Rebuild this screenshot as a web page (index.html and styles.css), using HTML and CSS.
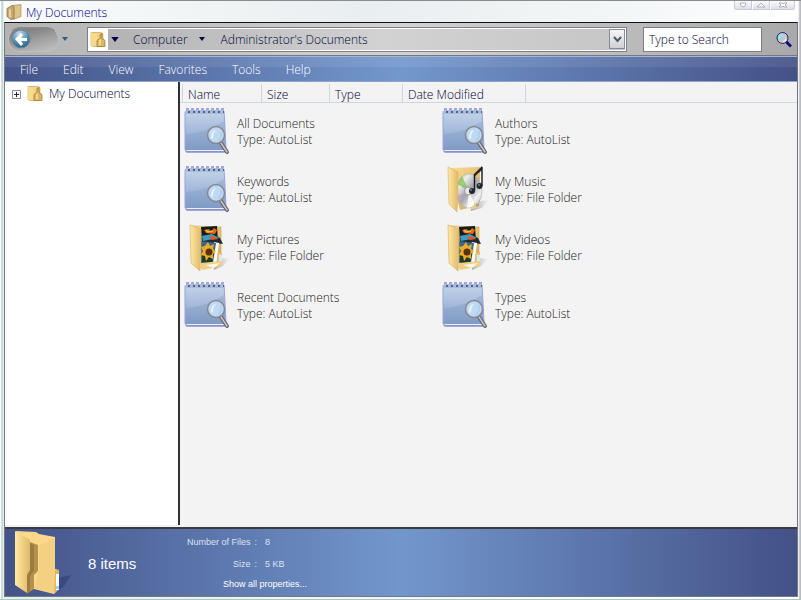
FILE: index.html
```html
<!DOCTYPE html>
<html lang="en">
<head>
<meta charset="utf-8">
<title>My Documents</title>
<link rel="stylesheet" href="styles.css">
</head>
<body>
<svg class="defs" aria-hidden="true">
  <defs>
    <linearGradient id="pad" x1="0" y1="0" x2="0" y2="1">
      <stop offset="0" stop-color="#c3d5ea"/><stop offset=".5" stop-color="#a3b9d9"/><stop offset="1" stop-color="#829dc5"/>
    </linearGradient>
    <linearGradient id="flap" x1="0" y1="0" x2="1" y2="0">
      <stop offset="0" stop-color="#ffe9a4"/><stop offset="1" stop-color="#e0b968"/>
    </linearGradient>
    <linearGradient id="back" x1="0" y1="0" x2="1" y2="1">
      <stop offset="0" stop-color="#ffe09a"/><stop offset="1" stop-color="#cfa354"/>
    </linearGradient>
    <linearGradient id="disc" x1="0" y1="0" x2="1" y2="1">
      <stop offset="0" stop-color="#83b95b"/><stop offset=".25" stop-color="#eef0ee"/><stop offset=".5" stop-color="#a4a4a9"/><stop offset=".75" stop-color="#f3f1f5"/><stop offset="1" stop-color="#a49aad"/>
    </linearGradient>
    <linearGradient id="shade" x1="0" y1="0" x2="1" y2="0">
      <stop offset="0" stop-color="#555" stop-opacity=".5"/><stop offset="1" stop-color="#777" stop-opacity="0"/>
    </linearGradient>
    <radialGradient id="globe" cx=".4" cy=".2" r=".9">
      <stop offset="0" stop-color="#c4dcea"/><stop offset=".55" stop-color="#5590b5"/><stop offset="1" stop-color="#1c4f78"/>
    </radialGradient>
  </defs>
  <symbol id="i-autolist" viewBox="0 0 48 48">
    <path d="M3 4h38l1 17 1 22q0 2-2 2H5q-3 0-3-3V6q0-2 1-2z" fill="url(#pad)" stroke="#9aa0dc"/>
    <path d="M3 27q20-1 38-13l1 29H3z" fill="#6f8dbb" opacity=".25"/>
    <path d="M3 43h39v1H5q-2 0-2-1z" fill="#eef0f8"/>
    <path d="M3 45h39" stroke="#8184cc"/>
    <path d="M3 3h38v4H3z" fill="#a9bbdc"/>
    <path d="M3 2h39" stroke="#a3a6de" stroke-width="2" stroke-dasharray="3 2"/>
    <path d="M5 5h36" stroke="#56637f" stroke-width="2" stroke-dasharray="2 3"/>
    <path d="M38 36l6 9" stroke="#68666b" stroke-width="4" stroke-linecap="round"/>
    <path d="M38 36l6 9" stroke="#c8c5c9" stroke-width="1.5" stroke-linecap="round"/>
    <circle cx="33" cy="28" r="8.5" fill="#c0d9f2" stroke="#85878e" stroke-width="1.5"/>
    <path d="M28 31q0-8 5-8-3 3-3 9z" fill="#e2f2ff"/>
    <path d="M35 34q4-3 3-10" fill="none" stroke="#a9cef0" stroke-width="1.5"/>
  </symbol>
  <symbol id="i-pictures" viewBox="0 0 48 48">
    <path d="M30 34l17 2-7 7-9 4z" fill="url(#shade)"/>
    <path d="M9 3l29 1v36l-18 3z" fill="url(#back)" stroke="#c9a14f" stroke-width=".6"/>
    <path d="M18 4l16-1 1 16-16 6z" fill="#111c25"/>
    <path d="M19 12q11-2 18 3l3 6-21-3z" fill="#222b33"/>
    <path d="M19 13l10-2 7 4-16 3z" fill="#3d9bc4"/>
    <path d="M21 7l5-1 2 3 3-4 3 2-2 4-9-1z" fill="#e76a1a"/>
    <path d="M23 7l2 2 5-1" fill="none" stroke="#f4c037" stroke-width="1.5"/>
    <path d="M26 14l4-1 5 3-6 1z" fill="#e9571c"/>
    <path d="M31 19l5 1-3 23-13-1z" fill="#fff"/>
    <path d="M18 18l15 2-3 20-12 1z" fill="#35688b"/>
    <path d="M19 32l12-2-2 10-10 1z" fill="#223b22"/>
    <path d="M25 19l2 4 4-2-1 5 3 2-3 3 0 5-4-2-3 4-1-5-4-1 2-4-2-4 4-1z" fill="#ecac29"/>
    <circle cx="26" cy="29" r="3.5" fill="#54330c"/>
    <path d="M34 31l5-2v14l-4 1z" fill="#e8c376"/><path d="M36 32h3v10h-3z" fill="#d9e9f6"/>
    <path d="M7 2l11 4v27l-1 15L8 40z" fill="url(#flap)" stroke="#d5af5c" stroke-width=".6"/>
    <path d="M17 40l22-2v5l-19 4-3-2z" fill="#efcf86"/><path d="M22 42l15-2-6 5z" fill="#fff" opacity=".8"/>
  </symbol>
  <symbol id="i-music" viewBox="0 0 48 48">
    <path d="M30 37l18-2-7 8-11 3z" fill="url(#shade)"/>
    <path d="M8 3l31-1v38l-20 5z" fill="url(#back)"/>
    <ellipse cx="28" cy="26" rx="13" ry="17" fill="url(#disc)" stroke="#b7b4a7" stroke-width=".7"/>
    <path d="M28 26l-12-7 5-8z" fill="#7fbd4b" opacity=".7"/><path d="M28 26l6 15-8 2z" fill="#fff" opacity=".8"/><path d="M28 26l-11 9-1-4z" fill="#c77ad2" opacity=".4"/>
    <ellipse cx="27" cy="26" rx="3.5" ry="4" fill="#e7e8ea" stroke="#999"/>
    <path d="M34 38l5-1v5l-10 3z" fill="#edcb80"/><path d="M35 39l3-1v3l-3 1z" fill="#78aee0"/>
    <path d="M7 2l10 5v23l-1 17-8-8z" fill="url(#flap)" stroke="#d7b160" stroke-width=".6"/>
    <path d="M33 9l8-8v4l-8 7z" fill="#26272d"/>
    <path d="M33.500 9v17M41 2v19" stroke="#17181d" stroke-width="1.4"/>
    <ellipse cx="31" cy="26" rx="3" ry="3" fill="#24272f"/><ellipse cx="38.500" cy="21" rx="3" ry="3" fill="#24272f"/>
    <path d="M29 25h2M37 20h2" stroke="#9eabc7"/>
  </symbol>
  <symbol id="i-folder" viewBox="0 0 16 16">
    <path d="M1 1h10l2 1v13H3l-2-1z" fill="#f3d186" stroke="#c59a47" stroke-width=".6"/>
    <path d="M1 1l6 2v12l-6-1z" fill="#f8da8d"/>
    <path d="M7 15V9l3-2V3l2-1v5l3 2v6z" fill="#dfb661" stroke="#94742f" stroke-width=".7"/>
    <path d="M10 8v6" stroke="#fff3ce"/>
  </symbol>
  <symbol id="i-title" viewBox="0 0 16 16">
    <path d="M6 2l9-1v12l-8 3z" fill="#dfc38d" stroke="#a98c59" stroke-width=".7"/>
    <path d="M1 5l5-3 2 1v12l-3 1-4-3z" fill="#cba96d" stroke="#8d7142" stroke-width=".8"/>
    <path d="M4 6v8" stroke="#f3dfb0" stroke-width="1.500"/>
  </symbol>
  <symbol id="i-bigfolder" viewBox="0 0 60 66">
    <path d="M45 48l13-3-7 11-9 7z" fill="#29366b" opacity=".5"/>
    <path d="M3 1l20 1 3 2 16 3v32l4 1v19l-5 5-20-5z" fill="#fbd88a"/>
    <path d="M42 40h4v19l-5 4z" fill="#e2b65d"/>
    <path d="M43 44h3v16h-3z" fill="#f6fbff"/><path d="M43 56h3v3h-3z" fill="#9acdf3"/>
    <path d="M42 8v34l-1 21-20-5 5-17V15z" fill="#eec77a" opacity=".5"/>
    <path d="M2 1l15 9v32l-3 4v17L2 55z" fill="url(#flap)"/>
    <path d="M17 12l8 3v26l-4 4v14l-6 4V45l2-4z" fill="#b5924b"/>
    <path d="M17 13l4 2v26l-4 5v16l-3 2V45l3-5z" fill="#9b7d3f"/>
  </symbol>
</svg>

<div class="window">
  <header class="titlebar">
    <svg class="icon16"><use href="#i-title"/></svg>
    <h1>My Documents</h1>
    <div class="controls">
      <button type="button" aria-label="Minimize"><svg viewBox="0 0 10 6"><path d="M2 1h6L7 4 5 5 3 4z"/></svg></button>
      <button type="button" aria-label="Maximize"><svg viewBox="0 0 10 6"><path d="M1 5l4-4 4 4z"/></svg></button>
      <button type="button" aria-label="Close"><svg viewBox="0 0 10 6"><path d="M1 1h3l1 1 1-1h3L7 3l2 2H6L5 4 4 5H1l2-2z"/></svg></button>
    </div>
  </header>

  <div class="frame">
    <div class="toolbar">
      <div class="nav">
        <button type="button" class="back" aria-label="Back">
          <svg viewBox="0 0 20 20"><circle cx="10" cy="10" r="9" fill="url(#globe)" stroke="#6b8599"/><path d="M4 10l6-6 2 2-2 3h6v3h-6l2 3-2 2z" fill="#fff"/></svg>
        </button>
      </div>
      <button type="button" class="arrow history" aria-label="Recent pages"><svg viewBox="0 0 6 4"><path d="M0 0h6L3 4z"/></svg></button>
      <div class="address">
        <span class="place"><svg class="icon16"><use href="#i-folder"/></svg></span>
        <button type="button" class="arrow root" aria-label="Locations"><svg viewBox="0 0 6 4"><path d="M0 0h6L3 4z"/></svg></button>
        <a href="#computer">Computer</a>
        <button type="button" class="arrow" aria-label="Computer folders"><svg viewBox="0 0 6 4"><path d="M0 0h6L3 4z"/></svg></button>
        <a href="#documents">Administrator's Documents</a>
        <button type="button" class="drop" aria-label="Previous locations"><svg viewBox="0 0 9 7"><path d="M1 1l3.500 4L8 1" fill="none" stroke="#46597d" stroke-width="2"/></svg></button>
      </div>
      <input class="search" type="text" aria-label="Search" value="Type to Search">
      <button type="button" class="find" aria-label="Find"><svg viewBox="0 0 16 16"><path d="M10 10l5 5" stroke="#10107c" stroke-width="3"/><circle cx="6.500" cy="6.500" r="5.500" fill="#c4c8ca" stroke="#20206c"/><path d="M3 7q0-3 3-4" fill="none" stroke="#6ff" stroke-width="1.500"/><path d="M7 10q3 0 3-3" fill="none" stroke="#fff"/></svg></button>
    </div>

    <nav class="menu">
      <button type="button">File</button>
      <button type="button">Edit</button>
      <button type="button">View</button>
      <button type="button">Favorites</button>
      <button type="button">Tools</button>
      <button type="button">Help</button>
    </nav>

    <main class="body">
      <aside class="tree">
        <button type="button" class="expand" aria-label="Expand My Documents"><svg viewBox="0 0 9 9"><path d="M.5.5h8v8h-8z" fill="#fff" stroke="#8a8f96"/><path d="M2 4.500h5M4.500 2v5" stroke="#223"/></svg></button>
        <svg class="icon16"><use href="#i-folder"/></svg>
        <a href="#documents">My Documents</a>
      </aside>
      <section class="listing">
        <div class="columns">
          <button type="button" class="name">Name</button>
          <button type="button" class="size">Size</button>
          <button type="button" class="type">Type</button>
          <button type="button" class="date">Date Modified</button>
        </div>
        <ul class="items">
          <li><svg><use href="#i-autolist"/></svg><p>All Documents<br>Type: AutoList</p></li>
          <li><svg><use href="#i-autolist"/></svg><p>Authors<br>Type: AutoList</p></li>
          <li><svg><use href="#i-autolist"/></svg><p>Keywords<br>Type: AutoList</p></li>
          <li><svg><use href="#i-music"/></svg><p>My Music<br>Type: File Folder</p></li>
          <li><svg><use href="#i-pictures"/></svg><p>My Pictures<br>Type: File Folder</p></li>
          <li><svg><use href="#i-pictures"/></svg><p>My Videos<br>Type: File Folder</p></li>
          <li><svg><use href="#i-autolist"/></svg><p>Recent Documents<br>Type: AutoList</p></li>
          <li><svg><use href="#i-autolist"/></svg><p>Types<br>Type: AutoList</p></li>
        </ul>
      </section>
    </main>

    <footer class="details">
      <svg class="big"><use href="#i-bigfolder"/></svg>
      <p class="count">8 items</p>
      <div class="facts">
        <dl>
          <dt>Number of Files</dt><dd>8</dd>
          <dt>Size</dt><dd>5 KB</dd>
        </dl>
        <a href="#properties">Show all properties...</a>
      </div>
    </footer>
  </div>
</div>
</body>
</html>
```

FILE: styles.css
```css
* { box-sizing: border-box; }

body {
  margin: 0;
  font: 300 12px/16px "Open Sans", "Noto Sans", sans-serif;
  color: #000038;
}

button {
  padding: 0;
  border: 0;
  background: none;
  font: inherit;
  color: inherit;
}

a { color: inherit; text-decoration: none; }
svg { display: block; flex: none; }
.defs { position: absolute; width: 0; height: 0; }
.icon16 { width: 16px; height: 17px; }

.window {
  display: flex;
  flex-direction: column;
  height: 100vh;
  padding: 0 3px 2px 4px;
  border-top: 1px solid #8b8b8f;
  border-bottom: 1px solid #a5c9c6;
  background: linear-gradient(90deg, #fff 0 1px, #9fc2bf 2px, #e6efee 3px, #f4f7f7 50%, #fff calc(100% - 3px), #b9bcc0 calc(100% - 1px));
}

.titlebar {
  display: flex;
  align-items: flex-start;
  gap: 4px;
  height: 21px;
  padding: 2px 3px 0 2px;
  background: linear-gradient(90deg, #fafcfc, #e9eef0 45%, #f4f7f8 80%, #fff);
}

.titlebar h1 {
  flex: 1;
  margin: 0;
  font-size: 12px;
  font-weight: inherit;
  line-height: 20px;
  color: #000090;
}

.controls { display: flex; margin-top: -2px; }

.controls button {
  display: grid;
  place-items: center;
  width: 18px;
  height: 9px;
  border: 1px solid #c9cad8;
  border-top: 0;
  border-left-color: #fff;
  background: linear-gradient(#fafafd, #dfdfe9);
}

.controls button:first-child { border-left-color: #c9cad8; border-bottom-left-radius: 3px; }
.controls button:last-child { width: 25px; border-bottom-right-radius: 3px; }
.controls svg { width: 10px; height: 6px; fill: #fff; stroke: #b0b0b4; }

.frame {
  display: flex;
  flex: 1;
  flex-direction: column;
  min-height: 0;
  border: 1px solid #77787c;
  border-top-color: #111;
}

.toolbar {
  display: flex;
  align-items: center;
  height: 33px;
  padding: 0 5px 0 3px;
  border-bottom: 1px solid #77797e;
  background: linear-gradient(90deg, #b3b3b3, #d3d3d3 50%, #a9a9a9);
}

.nav {
  width: 51px;
  height: 25px;
  padding: 1px 2px;
  border: 1px solid #c0c0c0;
  border-top-color: #8c8c8c;
  border-radius: 13px;
  background: linear-gradient(165deg, #858585 25%, #a0a0a0 55%, #c3c3c3);
}

.back svg { width: 20px; height: 20px; }
.arrow { display: grid; place-items: center; width: 16px; height: 20px; }
.arrow svg { width: 6px; height: 4px; fill: #00004c; }
.arrow.history { width: 12px; }
.arrow.history svg { fill: #285f86; }
.arrow.root { width: 14px; }
.arrow.root svg { width: 8px; height: 5px; }

.address {
  display: flex;
  flex: 1;
  align-items: center;
  height: 25px;
  margin: 0 16px;
  border: 1px solid #7d7f87;
  outline: 1px solid #fff;
  outline-offset: -2px;
  background: linear-gradient(90deg, #b1b1b1, #d2d2d2 55%, #c6c6c6);
}

.address a { padding: 2px 6px 0 11px; }
.place { padding: 3px 2px; background: #fff; }

.drop {
  display: grid;
  place-items: center;
  width: 16px;
  height: 20px;
  margin: 0 1px 0 auto;
  border: 1px solid #858b98;
  background: linear-gradient(#f6f6f6, #d1d1d1);
}

.drop svg { width: 9px; height: 7px; }

.search {
  width: 119px;
  height: 25px;
  padding: 0 5px;
  border: 1px solid #7d7f87;
  border-radius: 0;
  background: #fff;
  font: inherit;
  color: inherit;
}

.find { margin-left: 14px; }
.find svg { width: 16px; height: 17px; }

.menu {
  display: flex;
  gap: 25px;
  height: 26px;
  padding: 2px 15px 0;
  border-top: 1px solid #a4b6d8;
  border-bottom: 1px solid #8fa4cd;
  background:
    linear-gradient(rgba(255, 255, 255, .08) 10px, transparent 10px),
    linear-gradient(90deg, #435389, #7398cc 50%, #435187);
  color: #fff;
}

.body { display: flex; flex: 1; min-height: 0; background: #f3f3f3; }

.tree {
  display: flex;
  align-items: flex-start;
  width: 173px;
  margin-bottom: 2px;
  padding: 3px 7px;
  background: #fff;
}

.tree a { margin-left: 6px; line-height: 18px; }
.expand { margin: 5px 6px 0 0; }
.expand svg { width: 9px; height: 9px; }

.listing {
  flex: 1;
  margin-bottom: 2px;
  border-left: 2px solid #303036;
}

.columns { display: flex; padding: 2px 0 0 2px; border-bottom: 1px solid #cfd6dd; }

.columns button {
  height: 18px;
  padding: 3px 0 0 5px;
  border-right: 1px solid #cfd6dd;
  text-align: left;
}

.columns .name { width: 80px; border-left: 1px solid #cfd6dd; }
.columns .size { width: 68px; }
.columns .type { width: 73px; }
.columns .date { width: 123px; }

.items {
  display: grid;
  grid-template-columns: repeat(auto-fill, 258px);
  margin: 0;
  padding: 0 0 0 3px;
  list-style: none;
  color: #222;
}

.items li { display: flex; gap: 6px; height: 58px; padding-top: 4px; }
.items svg { width: 48px; height: 48px; }
.items p { margin: 9px 0 0; }

.details {
  display: flex;
  align-items: center;
  height: 69px;
  padding: 0 8px;
  border-top: 2px solid #3a3a40;
  background: linear-gradient(90deg, #435389, #7297cc 50%, #435187);
  color: #fff;
  font-family: "Liberation Sans", sans-serif;
  font-weight: 400;
}

.big { width: 60px; height: 66px; }
.count { width: 84px; margin: 2px 0 0 15px; font-size: 15px; }

.facts {
  display: grid;
  gap: 8px;
  padding: 0 10px;
  font-size: 9px;
  line-height: 12px;
}

.facts a { margin-left: 41px; }

.facts dl {
  display: grid;
  grid-template-columns: 75px 50px;
  row-gap: 10px;
  margin: 0;
  color: #dbe3f2;
}

.facts dt { text-align: right; }
.facts dt::after { content: ":"; margin-left: 4px; }
.facts dd { margin: 0 0 0 8px; }
```
